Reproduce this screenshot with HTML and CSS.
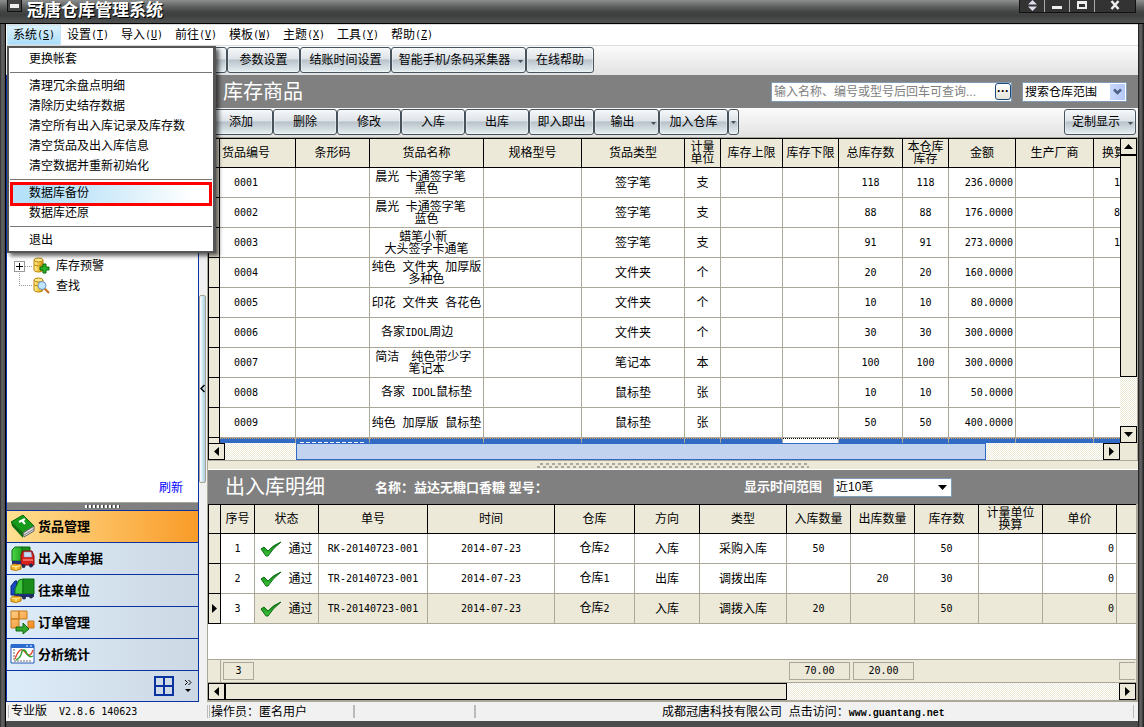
FILE: index.html
```html
<!DOCTYPE html>
<html lang="zh-CN">
<head>
<meta charset="utf-8">
<title>冠唐仓库管理系统</title>
<link rel="stylesheet" href="styles.css">
</head>
<body>
<svg class="defs" aria-hidden="true">
  <defs>
    <linearGradient id="gold" x1="0" x2="1"><stop offset="0" stop-color="#fff3a0"/><stop offset=".5" stop-color="#f5c842"/><stop offset="1" stop-color="#c98a10"/></linearGradient>
    <linearGradient id="tick" x1="0" y1="0" x2="0" y2="1"><stop offset="0" stop-color="#0c7a12"/><stop offset="1" stop-color="#3cc43a"/></linearGradient>
    <linearGradient id="orange" x1="0" y1="0" x2="1" y2="1"><stop offset="0" stop-color="#ffd08a"/><stop offset="1" stop-color="#f28a1c"/></linearGradient>
    <linearGradient id="leaf" x1="0" x2="1"><stop offset="0" stop-color="#4fd94a"/><stop offset="1" stop-color="#1fa020"/></linearGradient>
    <symbol id="i-check" viewBox="0 0 22 16"><path d="M1 8 L4 6 L8 10 Q13 4 21 1 Q13 7 8 15 H6 Z" fill="url(#tick)" stroke="#0a6b10" stroke-width="1"/></symbol>
    <symbol id="i-left" viewBox="0 0 9 9"><path d="M7 0V9L2 4.500Z"/></symbol>
    <symbol id="i-right" viewBox="0 0 9 9"><path d="M2 0V9L7 4.500Z"/></symbol>
    <symbol id="i-up" viewBox="0 0 9 9"><path d="M0 7H9L4.500 2Z"/></symbol>
    <symbol id="i-down" viewBox="0 0 9 9"><path d="M0 2H9L4.500 7Z"/></symbol>
    <symbol id="i-caret" viewBox="0 0 5 3"><path d="M0 0H5L2.500 3Z"/></symbol>
    <symbol id="i-drum" viewBox="0 0 16 16"><path d="M1 3V13Q1 15 5.500 15T10 13V3Z" fill="url(#gold)" stroke="#b8860b"/><ellipse cx="5.500" cy="3" rx="4.500" ry="2" fill="#ffe98a" stroke="#b8860b"/><path d="M1 8Q5 10 10 8" fill="none" stroke="#b8860b"/></symbol>
    <symbol id="i-boxes" viewBox="0 0 12 8"><path d="M1 2.500L4 1L11 2V6L6 7.500L1 6.500Z" fill="#f4b52b" stroke="#b87a08"/><path d="M1.500 3L6 4L10.500 2.500M6 4V7" stroke="#fff0a8" fill="none"/></symbol>
  </defs>
</svg>
<div class="window">
  <header class="titlebar">
    <button class="sysbtn" type="button" aria-label="系统菜单"><span></span></button>
    <h1>冠唐仓库管理系统</h1>
    <div class="winbtns">
      <button type="button" aria-label="展开"><svg width="9" height="12" viewBox="0 0 9 12"><path d="M0 4.500L4.500 0L9 4.500ZM0 6.500L4.500 11L9 6.500Z" fill="#dde"/></svg></button>
      <button type="button" aria-label="最小化"><svg width="10" height="12" viewBox="0 0 10 12"><path d="M0 6H10V9H0Z" fill="#eee"/></svg></button>
      <button type="button" aria-label="最大化"><svg width="10" height="12" viewBox="0 0 10 12"><path d="M0 1H10V9H0ZM2 4V7H8V4Z" fill="#eee" fill-rule="evenodd"/></svg></button>
      <button class="close" type="button" aria-label="关闭"><svg width="10" height="12" viewBox="0 0 10 12"><path d="M1.500 1L8.500 9M8.500 1L1.500 9" stroke="#eee" stroke-width="2.500"/></svg></button>
    </div>
  </header>

  <nav class="menubar">
    <button type="button" class="open">系统<span class="n">(<u>S</u>)</span></button>
    <button type="button">设置<span class="n">(<u>T</u>)</span></button>
    <button type="button">导入<span class="n">(<u>U</u>)</span></button>
    <button type="button">前往<span class="n">(<u>V</u>)</span></button>
    <button type="button">模板<span class="n">(<u>W</u>)</span></button>
    <button type="button">主题<span class="n">(<u>X</u>)</span></button>
    <button type="button">工具<span class="n">(<u>Y</u>)</span></button>
    <button type="button">帮助<span class="n">(<u>Z</u>)</span></button>
    <div class="dropdown">
      <button type="button">更换帐套</button>
      <hr>
      <button type="button">清理冗余盘点明细</button>
      <button type="button">清除历史结存数据</button>
      <button type="button">清空所有出入库记录及库存数</button>
      <button type="button">清空货品及出入库信息</button>
      <button type="button">清空数据并重新初始化</button>
      <hr>
      <button type="button" class="hot">数据库备份</button>
      <button type="button">数据库还原</button>
      <hr>
      <button type="button">退出</button>
    </div>
  </nav>

  <div class="toolbar main-tools">
    <button class="btn lead" type="button" aria-label="工具"></button>
    <button class="btn w73" type="button">参数设置</button>
    <button class="btn w91" type="button">结账时间设置</button>
    <button class="btn w135 drop" type="button">智能手机/条码采集器<svg class="caret"><use href="#i-caret"/></svg></button>
    <button class="btn w68" type="button">在线帮助</button>
  </div>

  <div class="body">
    <aside class="side">
      <div class="tree-head"></div>
      <div class="tree">
        <ul>
          <li><span class="plus"></span><span class="link"></span><svg width="18" height="18" viewBox="0 0 18 18"><use href="#i-drum" width="16" height="16"/><path d="M10 7H13V10H16V13H13V16H10V13H7V10H10Z" fill="#28b428" stroke="#0a6b10"/></svg>库存预警</li>
          <li><span class="elbow"></span><svg width="18" height="18" viewBox="0 0 18 18"><use href="#i-drum" width="16" height="16"/><path d="M11 11L16 16" stroke="#c96a1c" stroke-width="2"/><circle cx="9" cy="8.500" r="4" fill="#bfe4fb" stroke="#6a93c0"/></svg>查找</li>
        </ul>
        <a class="refresh" href="#refresh">刷新</a>
      </div>
      <div class="grip"><span></span></div>
      <nav class="modules">
        <button type="button" class="active"><svg width="26" height="26" viewBox="0 0 26 26"><path d="M1 8L13 1L24 12L13 19Z" fill="#169a1a" stroke="#086b0c"/><path d="M1 8L13 19V24L2 12Z" fill="#0a6f10"/><path d="M13 19L24 12V17L14 23Z" fill="#d8d8d8" stroke="#666"/><path d="M14 21L24 15" stroke="#888"/><path d="M9 8L15 5M12 6.500L15 10" stroke="#fff" stroke-width="2"/></svg>货品管理</button>
        <button type="button"><svg width="26" height="26" viewBox="0 0 26 26"><path d="M10 2L12 1H20V7H10Z" fill="#1a8c1c" stroke="#0a6b10"/><path d="M2 4L5 1H12V15H2Z" fill="url(#leaf)" stroke="#0a6b10"/><path d="M11 9L13 5H22L24 10V19H11Z" fill="#d8201c" stroke="#8c0c0c"/><path d="M14 6H21L22 11H14Z" fill="#c6dff4" stroke="#7d8fb0" stroke-width=".5"/><path d="M13 14H23" stroke="#ffb0a0"/><path d="M2 15H11V18H2Z" fill="#1c2f80"/><circle cx="13.500" cy="20" r="2" fill="#222c50"/><circle cx="21" cy="19.500" r="2" fill="#222c50"/><use href="#i-boxes" x="0" y="17" width="12" height="8"/></svg>出入库单据</button>
        <button type="button"><svg width="26" height="26" viewBox="0 0 26 26"><path d="M1 8L5 3L7 3V17H1Z" fill="#1848c8" stroke="#0a2570"/><path d="M5 11L9 2L13 1V16H5Z" fill="#44c93e" stroke="#0a6b10"/><path d="M13 1H24V16H13Z" fill="#1a8c1c" stroke="#0a6b10"/><path d="M4 16H24V19H4Z" fill="#1c2f80"/><circle cx="14" cy="19.500" r="2" fill="#222c50"/><circle cx="21" cy="18.500" r="2" fill="#222c50"/><use href="#i-boxes" x="0" y="17" width="12" height="8"/></svg>往来单位</button>
        <button type="button"><svg width="26" height="26" viewBox="0 0 26 26"><path d="M1 1H9V9H1ZM9 1H17V9H9ZM1 9H9V18H1ZM18 11H24V18H18Z" fill="url(#orange)" stroke="#c87818"/><path d="M6 17H13V13L19 19L13 24V21H6Z" fill="#35a52e" stroke="#126c10"/></svg>订单管理</button>
        <button type="button"><svg width="26" height="26" viewBox="0 0 26 26"><path d="M1 3H24V21H1Z" fill="#fff" stroke="#2458b8"/><path d="M1 2H24V6H1Z" fill="#2b6bd0"/><path d="M16 4H18M20 4H22" stroke="#fff"/><path d="M4 7V19H22" fill="none" stroke="#666" stroke-dasharray="2 1"/><path d="M5 17Q10 3 15 10T23 8" fill="none" stroke="#e8503a" stroke-width="1.500"/><path d="M6 18Q11 16 12 9Q15 6 17 12Q20 16 23 14" fill="none" stroke="#2ba52b" stroke-width="1.500"/></svg>分析统计</button>
        <div class="module-foot">
          <button type="button" aria-label="模块"><svg width="20" height="20" viewBox="0 0 20 20"><path d="M1 1H19V19H1ZM10 1V19M1 10H19" fill="none" stroke="#0a32a0" stroke-width="2"/></svg></button>
          <button type="button" aria-label="更多"><svg width="8" height="16" viewBox="0 0 8 16"><path d="M1 2L3.500 4.500L1 7M4.500 2L7 4.500L4.500 7" fill="none" stroke="#000"/><path d="M1 11H7L4 14Z"/></svg></button>
        </div>
      </nav>
    </aside>
    <div class="splitter"><button type="button" aria-label="收起"><svg width="5" height="9" viewBox="0 0 5 9"><path d="M4.500 1L1 4.500L4.500 8" fill="none" stroke="#000" stroke-width="1.500"/></svg></button></div>

    <main class="content">
      <section class="band top-band">
        <h2>库存商品</h2>
        <div class="search"><input type="text" aria-label="查询" placeholder="输入名称、编号或型号后回车可查询..."><button type="button" aria-label="选择">···</button></div>
        <div class="combo scope"><select aria-label="搜索范围"><option>搜索仓库范围</option></select><span class="combo-btn"><svg width="9" height="8" viewBox="0 0 9 8"><path d="M1 1.500L4.500 5L8 1.500" fill="none" stroke="#4d6185" stroke-width="2.500"/></svg></span></div>
      </section>
      <div class="toolbar sub-tools">
        <button class="btn w64" type="button">添加</button>
        <button class="btn w64" type="button">删除</button>
        <button class="btn w64" type="button">修改</button>
        <button class="btn w64" type="button">入库</button>
        <button class="btn w64" type="button">出库</button>
        <button class="btn w65" type="button">即入即出</button>
        <button class="btn w65 drop" type="button">输出<svg class="caret"><use href="#i-caret"/></svg></button>
        <button class="btn w69" type="button">加入仓库</button>
        <button class="btn w11 only" type="button" aria-label="更多仓库"><svg class="caret"><use href="#i-caret"/></svg></button>
        <button class="btn w72 drop end" type="button">定制显示<svg class="caret"><use href="#i-caret"/></svg></button>
      </div>

      <section class="stock">
        <div class="stock-view">
          <div class="stock-table">
            <table class="grid">
              <colgroup><col class="c12"><col class="c76"><col class="c74"><col class="c114"><col class="c98"><col class="c103"><col class="c36"><col class="c62"><col class="c56"><col class="c64"><col class="c46"><col class="c67"><col class="c78"><col></colgroup>
              <thead><tr><th></th><th class="l">货品编号</th><th>条形码</th><th>货品名称</th><th>规格型号</th><th>货品类型</th><th>计量<br>单位</th><th>库存上限</th><th>库存下限</th><th>总库存数</th><th>本仓库<br>库存</th><th>金额</th><th>生产厂商</th><th class="cut">换算</th></tr></thead>
              <tbody>
                <tr><th></th><td class="code">0001</td><td></td><td>晨光&nbsp; 卡通签字笔&emsp;<br>黑色</td><td></td><td>签字笔</td><td>支</td><td></td><td></td><td class="num">118</td><td class="num">118</td><td class="amt">236.0000</td><td></td><td class="part">1</td></tr>
                <tr><th></th><td class="code">0002</td><td></td><td>晨光&nbsp; 卡通签字笔&emsp;<br>蓝色</td><td></td><td>签字笔</td><td>支</td><td></td><td></td><td class="num">88</td><td class="num">88</td><td class="amt">176.0000</td><td></td><td class="part">8</td></tr>
                <tr><th></th><td class="code">0003</td><td></td><td>蜡笔小新&nbsp;&nbsp;<br>大头签字卡通笔</td><td></td><td>签字笔</td><td>支</td><td></td><td></td><td class="num">91</td><td class="num">91</td><td class="amt">273.0000</td><td></td><td class="part">1</td></tr>
                <tr><th></th><td class="code">0004</td><td></td><td>纯色&nbsp; 文件夹&nbsp; 加厚版<br>多种色</td><td></td><td>文件夹</td><td>个</td><td></td><td></td><td class="num">20</td><td class="num">20</td><td class="amt">160.0000</td><td></td><td></td></tr>
                <tr><th></th><td class="code">0005</td><td></td><td>印花&nbsp; 文件夹&nbsp; 各花色</td><td></td><td>文件夹</td><td>个</td><td></td><td></td><td class="num">10</td><td class="num">10</td><td class="amt">80.0000</td><td></td><td></td></tr>
                <tr><th></th><td class="code">0006</td><td></td><td>各家<span class="n">IDOL</span>周边&emsp;&nbsp;&nbsp;</td><td></td><td>文件夹</td><td>个</td><td></td><td></td><td class="num">30</td><td class="num">30</td><td class="amt">300.0000</td><td></td><td></td></tr>
                <tr><th></th><td class="code">0007</td><td></td><td>简洁&emsp;纯色带少字&nbsp;&nbsp;<br>笔记本</td><td></td><td>笔记本</td><td>本</td><td></td><td></td><td class="num">100</td><td class="num">100</td><td class="amt">300.0000</td><td></td><td></td></tr>
                <tr><th></th><td class="code">0008</td><td></td><td>各家&nbsp; <span class="n">IDOL</span>鼠标垫</td><td></td><td>鼠标垫</td><td>张</td><td></td><td></td><td class="num">10</td><td class="num">10</td><td class="amt">50.0000</td><td></td><td></td></tr>
                <tr><th></th><td class="code">0009</td><td></td><td>纯色&nbsp; 加厚版&nbsp; 鼠标垫</td><td></td><td>鼠标垫</td><td>张</td><td></td><td></td><td class="num">50</td><td class="num">50</td><td class="amt">400.0000</td><td></td><td></td></tr>
                <tr class="sel"><th></th><td></td><td class="dash"><i></i></td><td></td><td></td><td></td><td></td><td></td><td class="focus"></td><td></td><td></td><td></td><td></td><td></td></tr>
              </tbody>
            </table>
          </div>
          <div class="vscroll">
            <button type="button" aria-label="上"><svg width="9" height="9"><use href="#i-up"/></svg></button>
            <div class="thumb"></div><div class="track"></div>
            <button type="button" aria-label="下"><svg width="9" height="9"><use href="#i-down"/></svg></button>
          </div>
        </div>
        <div class="hscroll stock-scroll">
          <button type="button" aria-label="左"><svg width="9" height="9"><use href="#i-left"/></svg></button>
          <div class="track pre"></div><div class="thumb lit"></div><div class="track"></div>
          <button type="button" aria-label="右"><svg width="9" height="9"><use href="#i-right"/></svg></button>
          <div class="corner"></div>
        </div>
      </section>

      <div class="hsplit"><span></span></div>

      <section class="band detail-band">
        <h2>出入库明细</h2>
        <p>名称<span class="mid">：</span>益达无糖口香糖 型号<span class="mid">：</span></p>
        <label for="span">显示时间范围</label>
        <div class="combo period"><select id="span"><option>近10笔</option></select><svg width="9" height="9"><use href="#i-down"/></svg></div>
      </section>

      <section class="detail">
        <table class="grid moves">
          <colgroup><col class="c13"><col class="c34"><col class="c64"><col class="c109"><col class="c127"><col class="c80"><col class="c65"><col class="c87"><col class="c64"><col class="c64"><col class="c64"><col class="c64"><col class="c74"><col></colgroup>
          <thead><tr><th></th><th>序号</th><th>状态</th><th>单号</th><th>时间</th><th>仓库</th><th>方向</th><th>类型</th><th>入库数量</th><th>出库数量</th><th>库存数</th><th>计量单位<br>换算</th><th>单价</th><th></th></tr></thead>
          <tbody>
            <tr><th></th><td class="num">1</td><td><span class="ok"><svg width="22" height="16"><use href="#i-check"/></svg>通过</span></td><td class="num">RK-20140723-001</td><td class="num">2014-07-23</td><td>仓库<span class="n">2</span></td><td>入库</td><td>采购入库</td><td class="num">50</td><td></td><td class="num">50</td><td></td><td class="amt">0</td><td></td></tr>
            <tr><th></th><td class="num">2</td><td><span class="ok"><svg width="22" height="16"><use href="#i-check"/></svg>通过</span></td><td class="num">TR-20140723-001</td><td class="num">2014-07-23</td><td>仓库<span class="n">1</span></td><td>出库</td><td>调拨出库</td><td></td><td class="num">20</td><td class="num">30</td><td></td><td class="amt">0</td><td></td></tr>
            <tr class="cur"><th><svg width="9" height="9"><use href="#i-right"/></svg></th><td class="num first">3</td><td><span class="ok"><svg width="22" height="16"><use href="#i-check"/></svg>通过</span></td><td class="num">TR-20140723-001</td><td class="num">2014-07-23</td><td>仓库<span class="n">2</span></td><td>入库</td><td>调拨入库</td><td class="num">20</td><td></td><td class="num">50</td><td></td><td class="amt">0</td><td></td></tr>
          </tbody>
        </table>
        <div class="blank"></div>
        <table class="totals">
          <colgroup><col class="c13"><col class="c34"><col class="c64"><col class="c109"><col class="c127"><col class="c80"><col class="c65"><col class="c87"><col class="c64"><col class="c64"><col class="c64"><col class="c64"><col class="c74"><col></colgroup>
          <tbody><tr><td class="edge"></td><td><b>3</b></td><td></td><td></td><td></td><td></td><td></td><td></td><td><b>70.00</b></td><td><b>20.00</b></td><td></td><td></td><td></td><td><b class="open-end">&nbsp;</b></td></tr></tbody>
        </table>
        <div class="hscroll detail-scroll">
          <button type="button" aria-label="左"><svg width="9" height="9"><use href="#i-left"/></svg></button>
          <div class="thumb plain"></div><div class="track"></div>
          <button type="button" aria-label="右"><svg width="9" height="9"><use href="#i-right"/></svg></button>
        </div>
      </section>
    </main>
  </div>

  <footer class="status">
    <div class="edition">专业版<span class="n">V2.8.6 140623</span></div>
    <div class="operator">操作员<span class="mid">：</span>匿名用户</div>
    <div class="gap"></div>
    <div class="company">成都冠唐科技有限公司&nbsp; 点击访问<span class="mid">：</span><a href="#site">www.guantang.net</a></div>
  </footer>
</div>
</body>
</html>
```
FILE: styles.css
```css
* { box-sizing: border-box; }
body, h1, h2, p, ul { margin: 0; padding: 0; }
body {
  font-family: "Liberation Sans", "Noto Sans CJK SC", sans-serif;
  font-size: 12px;
  line-height: 12px;
  color: #000;
}
button, input, select { font: inherit; color: inherit; margin: 0; padding: 0; border: 0; border-radius: 0; background: none; }
button { display: flex; align-items: center; justify-content: center; white-space: nowrap; }
svg { display: block; flex: none; }
.defs { position: absolute; width: 0; height: 0; }
.n, .num, .code, .amt, .part, .totals b { font-family: "DejaVu Sans Mono", monospace; font-size: 10px; font-weight: normal; }
.mid { font-family: "Noto Sans CJK TC", sans-serif; }

.window {
  min-height: 100vh;
  display: flex;
  flex-direction: column;
  padding: 0 6px 6px;
  background: linear-gradient(90deg, #2a2a2a 0, #666 2px, #4c4c4c 5px, #000 5px, #000 6px, #4c4c4c 6px, #4c4c4c calc(100% - 6px), #000 calc(100% - 6px), #4c4c4c calc(100% - 5px), #666 calc(100% - 3px), #1a1a1a 100%);
  border-bottom: 1px solid #111;
}
.titlebar {
  height: 24px;
  margin: 0 -6px;
  padding: 0 8px 0 7px;
  display: flex;
  gap: 5px;
  background: linear-gradient(#8c8f8d 0, #6a6c6b 5px, #454746 11px, #3c3f3d 15px, #4e504f 22px);
  border-bottom: 1px solid #000;
}
.titlebar h1 { flex: 1; color: #fff; font-size: 17px; line-height: 21px; font-weight: bold; text-shadow: 1px 1px 0 #000; }
.sysbtn { width: 15px; height: 12px; border: 1px solid #111; border-top: 0; background: #444; }
.sysbtn span { width: 9px; height: 4px; background: #eee; }
.winbtns { display: flex; height: 13px; border: 1px solid #111; border-top: 0; background: #333; }
.winbtns button { width: 25px; border-right: 1px solid #aaa; }
.winbtns .close { width: 40px; border-right: 0; }

.menubar { position: relative; z-index: 5; display: flex; height: 21px; padding-left: 1px; background: #fff; border-top: 1px solid #ddd; }
.menubar > button { width: 54px; height: 20px; }
.menubar > .open { background: linear-gradient(#dff3fd, #a8dcf8); outline: 1px solid #c4e6f8; outline-offset: -1px; }
.dropdown { position: absolute; left: 1px; top: 21px; width: 209px; padding: 1px; background: #fff; border: 2px solid #555; border-right-width: 3px; box-shadow: 3px 3px 4px rgba(0,0,0,.6); }
.dropdown button { position: relative; width: 100%; height: 20px; justify-content: flex-start; padding-left: 19px; }
.dropdown hr { margin: 3px 0; height: 1px; border: 0; background: #777; }
.dropdown .hot { background: linear-gradient(100deg, #b5e2fa 20%, #d2ecfa 50%, #fff 90%); }
.dropdown .hot::after { content: ""; position: absolute; inset: -1px 0 -3px; border: 3px solid #f00; }

.toolbar { display: flex; height: 30px; padding: 1px 2px 3px 1px; background: linear-gradient(#fbfbfb, #e2e2e2); }
.main-tools { border-top: 1px solid #ddd; }
.btn {
  position: relative;
  height: 26px;
  border: 1px solid #46525c;
  border-radius: 3px;
  background: linear-gradient(#f6f8fa 0, #dde3e8 45%, #b9c2ca 50%, #d3dde2 80%, #e6f0f2 100%);
  box-shadow: inset 0 0 0 1px rgba(255,255,255,.35);
}
.lead { width: 220px; }
.w11 { width: 11px; } .w64 { width: 64px; } .w65 { width: 65px; } .w68 { width: 68px; } .w69 { width: 69px; }
.w72 { width: 72px; } .w73 { width: 73px; } .w91 { width: 91px; } .w135 { width: 135px; }
.drop { padding-right: 8px; }
.caret { width: 5px; height: 3px; fill: #46525c; }
.drop .caret { position: absolute; right: 2px; top: 12px; }
.end { margin-left: auto; }

.body { flex: 1; display: flex; background: #f1f1f1; }
.side { width: 193px; display: flex; flex-direction: column; border: solid #0a32a0; border-width: 0 1px; }
.tree-head { height: 31px; background: #3d7d9c; border-bottom: 1px solid #fff; }
.tree { flex: 1; display: flex; flex-direction: column; justify-content: space-between; background: #fff; border-bottom: 1px solid #aca899; padding-top: 150px; }
.tree ul { list-style: none; }
.tree li { display: flex; align-items: center; height: 20px; padding-left: 7px; }
.tree li svg { margin: 0 5px 0 1px; }
.plus { width: 11px; height: 11px; border: 1px solid #9a9a9a; background: linear-gradient(#000, #000) center / 7px 1px no-repeat, linear-gradient(#000, #000) center / 1px 7px no-repeat, #fff; }
.link { width: 7px; border-top: 1px dotted #999; }
.elbow { width: 13px; height: 15px; margin: 0 0 15px 5px; border-left: 1px dotted #999; border-bottom: 1px dotted #999; }
.refresh { align-self: flex-end; padding: 8px 15px; color: #00f; text-decoration: none; }
.grip { height: 7px; display: flex; justify-content: center; align-items: center; background: #808080; }
.grip span { width: 36px; height: 3px; background: repeating-linear-gradient(90deg, #fff 0, #fff 2px, #444 2px, #444 3px, #808080 3px, #808080 4px); }
.modules > button { width: 100%; height: 32px; justify-content: flex-start; gap: 2px; padding-left: 3px; border-top: 1px solid #0a32a0; background: linear-gradient(90deg, #dcecf8, #ccd8e4); font-size: 13px; font-weight: bold; }
.modules > .active { background: linear-gradient(90deg, #ffe092, #f99b28); }
.module-foot { height: 32px; display: flex; align-items: center; justify-content: flex-end; gap: 10px; padding-right: 6px; border: solid #0a32a0; border-width: 1px 0; background: linear-gradient(90deg, #dcecf8, #ccd8e4); }

.splitter { width: 9px; display: flex; align-items: center; justify-content: flex-end; padding-right: 1px; border-right: 1px solid #aca899; }
.splitter button { width: 7px; height: 188px; border: 1px solid #a8a090; border-radius: 2px; background: linear-gradient(90deg, #fff, #a7cfe4); }

.content { flex: 1; min-width: 0; display: flex; flex-direction: column; }
.band { display: flex; align-items: center; background: #808080; color: #fff; }
.band h2 { font-size: 20px; line-height: 24px; font-weight: normal; }
.top-band { height: 33px; padding: 0 11px 0 15px; gap: 10px; }
.top-band h2 { flex: 1; }
.search { display: flex; width: 241px; height: 20px; background: #fff; border: 1px solid #7f9db9; }
.search input { flex: 1; min-width: 0; padding-left: 2px; outline: 0; }
.search input::placeholder { color: #808080; opacity: 1; }
.search button { width: 16px; height: 17px; color: #000; font-weight: bold; border: 1px solid #1c4a7c; border-radius: 3px; background: linear-gradient(#fff, #e6e3d8); }
.combo { position: relative; height: 20px; color: #000; background: #fff; border: 1px solid #7f9db9; }
.combo select { display: block; width: 100%; height: 100%; padding-left: 2px; appearance: none; }
.scope { width: 105px; }
.combo-btn { position: absolute; inset: 1px 1px 1px auto; width: 15px; display: grid; place-items: center; pointer-events: none; background: linear-gradient(90deg, #c9d8fc, #b4c8f6); }
.sub-tools { border-bottom: 1px solid #aca899; }

.grid { width: 100%; table-layout: fixed; border-collapse: separate; border-spacing: 0; background: #fff; }
.grid th, .grid td { height: 30px; padding: 0; overflow: hidden; text-align: center; vertical-align: middle; white-space: nowrap; font-weight: normal; border-right: 1px solid #aca899; border-bottom: 1px solid #aca899; }
.grid th { background: #ece9d8; border-color: #000; }
.grid thead th { border-top: 1px solid #000; }
.grid tr > :first-child { border-left: 1px solid #000; }
.grid td.code { text-align: left; padding-left: 14px; }
.grid th.l { text-align: left; padding-left: 2px; }
.grid th.cut { text-align: left; padding-left: 8px; text-overflow: clip; }
.grid td.part { text-align: left; padding-left: 20px; text-overflow: clip; }
.grid td.amt { text-align: right; padding-right: 2px; }
.grid tr > :last-child { border-right: 0; }
.grid .sel td { background: repeating-linear-gradient(90deg, #d6a35a 0, #d6a35a 1px, #316ac5 1px, #316ac5 2px) top / 100% 1px no-repeat, #316ac5; vertical-align: top; }
.grid .sel .focus { background: repeating-linear-gradient(90deg, #000 0, #000 1px, #fff 1px, #fff 2px) top / 100% 1px no-repeat, #fff; }
.dash i { display: block; width: 66px; height: 1px; margin: 4px auto 0; background: repeating-linear-gradient(90deg, #fff 0, #fff 4px, #316ac5 4px, #316ac5 6px); }
.c12 { width: 12px; } .c13 { width: 13px; } .c34 { width: 34px; } .c36 { width: 36px; } .c46 { width: 46px; } .c56 { width: 56px; }
.c62 { width: 62px; } .c64 { width: 64px; } .c65 { width: 65px; } .c67 { width: 67px; } .c74 { width: 74px; }
.c76 { width: 76px; } .c78 { width: 78px; } .c80 { width: 80px; } .c87 { width: 87px; } .c98 { width: 98px; }
.c103 { width: 103px; } .c109 { width: 109px; } .c114 { width: 114px; } .c127 { width: 127px; }

.stock { flex: 1 0 322px; display: flex; flex-direction: column; border-right: 1px solid #aca899; }
.stock-view { flex: 1 1 0; min-height: 0; display: flex; overflow: hidden; }
.stock-table { flex: 1; min-width: 0; overflow: hidden; background: #fff; }
.track { flex: 1; background: repeating-conic-gradient(#ece9d8 0 25%, #fff 0 50%) 0 0 / 2px 2px; }
.vscroll, .hscroll { display: flex; flex: none; }
.vscroll { width: 17px; flex-direction: column; }
.vscroll button, .hscroll button { width: 17px; height: 17px; flex: none; border: 1px solid #000; background: #ece9d8; }
.thumb { background: #ece9d8; border: 1px solid #000; }
.vscroll .thumb { flex: 0 1 222px; }
.hscroll { height: 17px; }
.pre { flex: 0 0 71px; }
.stock-scroll .thumb { flex: 0 1 690px; background: #c2d3f0; border-color: #316ac5; }
.corner { width: 17px; background: #ece9d8; }
.hsplit { height: 10px; display: flex; align-items: center; justify-content: center; background: #ece9d8; border-top: 1px solid #aca899; border-bottom: 1px solid #fff; }
.hsplit span { width: 272px; height: 5px; background: conic-gradient(#aca899 25%, transparent 0 50%, #aca899 0 75%, transparent 0) 0 0 / 6px 5px; }

.detail-band { height: 34px; padding-left: 17px; font-size: 13px; font-weight: bold; }
.detail-band h2 { width: 150px; }
.detail-band p { width: 369px; }
.detail-band label { width: 89px; }
.period { width: 119px; font-size: 12px; font-weight: normal; height: 19px; }
.period svg { position: absolute; right: 4px; top: 4px; pointer-events: none; }
.detail { display: flex; flex-direction: column; border-right: 2px solid #aca899; border-bottom: 2px solid #aca899; }
.moves thead th { height: 30px; }
.moves .cur td { background: #ece9d8; }
.moves .cur .first { background: #fff; }
.moves th svg { margin-left: 1px; }
.ok { display: flex; align-items: center; justify-content: center; gap: 6px; }
.blank { height: 35px; background: #fff; }
.totals { width: 100%; height: 24px; table-layout: fixed; border-collapse: separate; border-spacing: 0; background: #ece9d8; border: solid #aca899; border-width: 1px 0 1px; }
.totals td { padding: 0 1px 0 2px; text-align: center; }
.totals .edge { border-right: 1px solid #aca899; }
.totals b { display: block; height: 18px; line-height: 16px; border: 1px solid #aca899; }
.totals .open-end { border-right: 0; }
.detail-scroll .thumb { flex: 0 1 562px; }

.status { display: flex; align-items: center; height: 19px; background: #f1f1f1; }
.status > div { height: 13px; border-left: 1px solid #bbb; padding-left: 3px; white-space: nowrap; }
.status .edition { width: 200px; margin-left: 2px; padding-left: 2px; border-right: 1px solid #bbb; }
.edition .n { margin-left: 12px; }
.status .operator { width: 145px; padding-left: 1px; border-right: 1px solid #bbb; margin-left: 1px; }
.status .gap { width: 121px; border-right: 1px solid #bbb; }
.status .company { flex: 1; padding-left: 186px; margin-right: 4px; border-right: 1px solid #bbb; }
.company a { color: #000; text-decoration: none; font-family: "Liberation Mono", monospace; font-size: 10px; font-weight: bold; }
```
